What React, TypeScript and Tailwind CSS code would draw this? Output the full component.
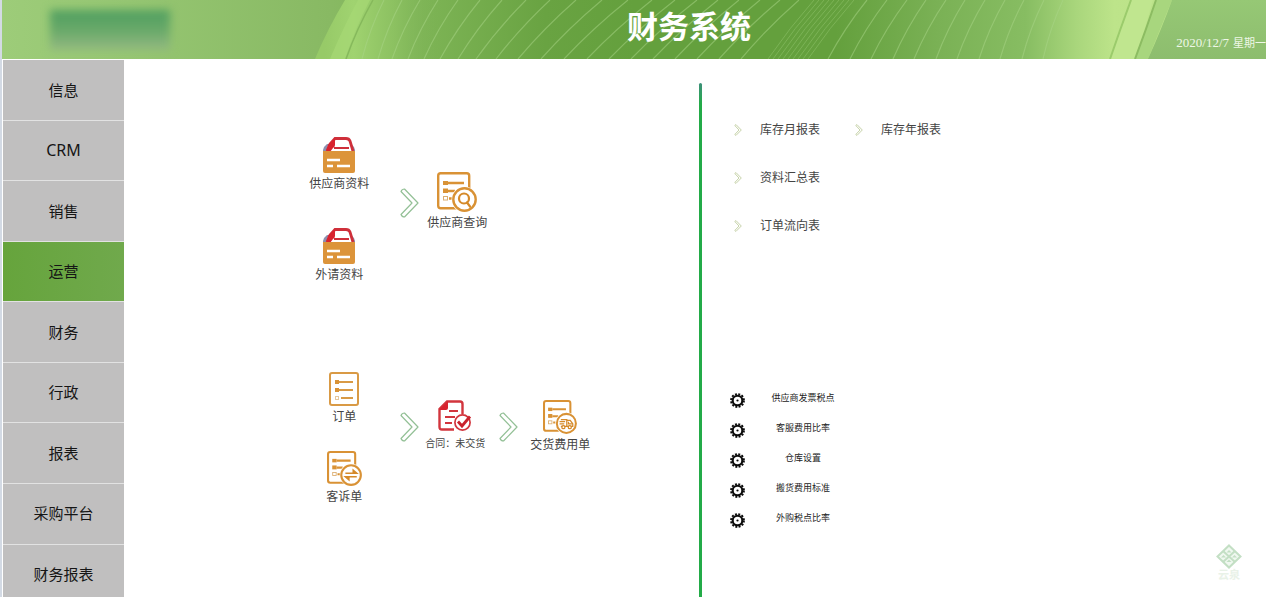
import { useState } from "react";
import type { ReactNode } from "react";

const menuItems = [
  "信息",
  "CRM",
  "销售",
  "运营",
  "财务",
  "行政",
  "报表",
  "采购平台",
  "财务报表",
];

const reportRows = [["库存月报表", "库存年报表"], ["资料汇总表"], ["订单流向表"]];

const settings = [
  "供应商发票税点",
  "客服费用比率",
  "仓库设置",
  "搬货费用标准",
  "外购税点比率",
];

// [bottom x, top x] of the thin lines across the banner
const bannerLines = [
  [362, 384], [378, 402], [392, 420], [408, 438], [424, 458], [440, 480],
  [458, 502], [476, 526], [496, 550], [518, 576], [541, 602], [564, 628],
  [587, 652], [609, 675], [631, 697], [653, 718], [675, 739], [697, 760],
  [719, 780], [741, 799], [828, 867], [850, 887], [871, 907], [893, 926],
  [914, 946], [936, 965], [957, 985], [979, 1005], [1000, 1024], [1022, 1044],
  [1043, 1063],
];

const denseLines = [768, 773, 778, 783, 788, 793, 798, 803, 808];

const Banner = () => (
  <svg
    className="absolute inset-0 h-full w-full"
    viewBox="2 0 1264 59"
    preserveAspectRatio="none"
    aria-hidden="true"
  >
    <defs>
      <linearGradient id="base" x1="2" x2="1266" gradientUnits="userSpaceOnUse">
        <stop offset="0" stopColor="#9dcc79" />
        <stop offset="0.1" stopColor="#96c672" />
        <stop offset="0.26" stopColor="#88b963" />
        <stop offset="0.34" stopColor="#7cb354" />
        <stop offset="0.43" stopColor="#69a342" />
        <stop offset="0.5" stopColor="#64a03d" />
        <stop offset="0.66" stopColor="#64a03d" />
        <stop offset="0.74" stopColor="#7ab155" />
        <stop offset="0.81" stopColor="#87bd62" />
        <stop offset="0.85" stopColor="#a9d67c" />
        <stop offset="0.88" stopColor="#bde48a" />
        <stop offset="0.91" stopColor="#bbe289" />
      </linearGradient>
      <linearGradient id="band" x1="325" x2="440" gradientUnits="userSpaceOnUse">
        <stop offset="0" stopColor="#97ca68" />
        <stop offset="0.25" stopColor="#a0d370" />
        <stop offset="0.6" stopColor="#8fc463" stopOpacity="0.8" />
        <stop offset="1" stopColor="#7ab155" stopOpacity="0" />
      </linearGradient>
      <linearGradient id="tail" x1="0" x2="0" y1="0" y2="1">
        <stop offset="0" stopColor="#96c875" />
        <stop offset="1" stopColor="#8dbd6e" />
      </linearGradient>
    </defs>
    <rect x="2" width="1264" height="59" fill="url(#base)" />
    <path d="M315 59Q328 28 345 0H450V59Z" fill="url(#band)" />
    <path d="M330 59Q343 28 358 0H370Q355 28 345 59Z" fill="#a6d975" opacity="0.7" />
    <path d="M346 59Q357 28 373 0" fill="none" stroke="#86b95c" strokeWidth="1.5" />
    {bannerLines.map(([bottom, top]) => (
      <path
        key={bottom}
        d={`M${bottom} 59Q${(bottom + top) / 2 - 3} 28 ${top} 0`}
        fill="none"
        stroke="#a9d588"
        strokeWidth="1.2"
        opacity="0.5"
      />
    ))}
    {denseLines.map((x) => (
      <path
        key={x}
        d={`M${x} 59Q${x + 22} 27 ${x + 46} 0`}
        fill="none"
        stroke="#8cbf68"
        strokeWidth="1"
        opacity="0.6"
      />
    ))}
    <path d="M1110 59Q1120 30 1131 0H1153Q1145 30 1135 59Z" fill="#c0e68f" />
    <path d="M1110 59Q1120 30 1131 0" fill="none" stroke="#9bcb6c" strokeWidth="2" />
    <path d="M1135 59Q1146 30 1156 0H1172L1148 59Z" fill="#a8d67e" />
    <path d="M1135 59Q1146 30 1156 0" fill="none" stroke="#8cbc62" strokeWidth="2" />
    <path d="M1148 59Q1162 28 1172 0H1266V59Z" fill="url(#tail)" />
  </svg>
);

const FolderIcon = () => (
  <svg width="34" height="36" viewBox="0 0 34 36" aria-hidden="true">
    <path d="M1 13Q2 9 5 7H29Q32 9 33 13V16H1Z" fill="#8d8fae" />
    <path d="M5 15V10L13 2H26Q28 2 28 4L30 15Z" fill="#fff" />
    <path d="M5 14L8 7L13 1.5H24Q27 1.5 28 4L31 14" fill="none" stroke="#cf2f3a" strokeWidth="2.8" />
    <path d="M4 15L6 8L13 1V8Q13 10 11 11L8 15Z" fill="#d8232f" />
    <path d="M12 11H27" stroke="#cf2f3a" strokeWidth="2" />
    <path d="M1 14H33V34Q33 36 31 36H3Q1 36 1 34Z" fill="#dc943a" />
    <path d="M5 23H18M5 29H11M15 29H28" stroke="#fff" strokeWidth="2.4" />
  </svg>
);

const OrderIcon = () => (
  <svg width="30" height="34" viewBox="0 0 30 34" aria-hidden="true">
    <rect x="1" y="1" width="28" height="32" rx="2" fill="#fff" stroke="#d99a45" strokeWidth="2" />
    <rect x="6" y="8" width="4" height="4" fill="#d99235" />
    <rect x="6" y="16" width="4" height="4" fill="#d99235" />
    <rect x="6.5" y="24.5" width="3" height="3" fill="none" stroke="#e6c79b" />
    <path d="M10 10H24M10 18H24M12 26H24" stroke="#d99a45" strokeWidth="2" />
  </svg>
);

// list sheet with a round badge over its lower right corner
const SheetIcon = ({ size, children }: { size: number; children: ReactNode }) => (
  <svg width={size} height={size} viewBox="0 0 40 40" aria-hidden="true">
    <rect x="1.2" y="1.2" width="31" height="35" rx="2.5" fill="#fff" stroke="#d99235" strokeWidth="2.4" />
    <rect x="6" y="9" width="5" height="4" fill="#d99235" />
    <rect x="6" y="16.5" width="5" height="4.5" fill="#d99235" />
    <rect x="6.5" y="24.5" width="4" height="3.5" fill="none" stroke="#dcae70" />
    <path d="M11 11H27M11 19H18M12 26.5H15" stroke="#d99235" strokeWidth="2.4" />
    <circle cx="27.5" cy="27.5" r="13" fill="#fff" />
    <circle cx="27.5" cy="27.5" r="11.2" fill="#fff" stroke="#d99235" strokeWidth="2.4" />
    {children}
  </svg>
);

const SearchBadge = () => (
  <g fill="none" stroke="#d58a2a" strokeWidth="2.2">
    <circle cx="27" cy="26.5" r="5" />
    <path d="M30 30.5L33 34.5" strokeLinecap="round" />
  </g>
);

const SwapBadge = () => (
  <g fill="#d58a2a" stroke="#d58a2a" strokeWidth="1.8">
    <path d="M21 25.5H34L30 22V25.5M34 29.5H21L25 33V29.5" />
  </g>
);

const TruckBadge = () => (
  <g fill="none" stroke="#d58a2a" strokeWidth="1.5">
    <path d="M21 23H28V31H21M19.5 25.5H26M19.5 28H25M28 24H32L35 28V31H28" />
    <path d="M30 25.5V28H34" />
    <circle cx="24" cy="32" r="1.8" fill="#fff" />
    <circle cx="31.5" cy="32" r="1.8" fill="#fff" />
  </g>
);

const ContractIcon = () => (
  <svg width="34" height="32" viewBox="0 0 34 32" aria-hidden="true">
    <path
      d="M16 29.5H4Q1.5 29.5 1.5 27V9L9 1.5H22Q24.5 1.5 24.5 4V14"
      fill="none"
      stroke="#d2353d"
      strokeWidth="2.4"
    />
    <path d="M1 10L10 1V8Q10 10 8 10Z" fill="#d8232f" />
    <path d="M11 11H20M7 17H17M7 23H14" stroke="#d2353d" strokeWidth="2" />
    <circle cx="24.5" cy="22.5" r="7.6" fill="#fff" stroke="#d2353d" strokeWidth="1.7" />
    <path d="M20 21.5L24 26L32 16.5" fill="none" stroke="#c9222c" strokeWidth="2.8" />
  </svg>
);

const FlowArrow = () => (
  <svg className="shrink-0" width="19" height="30" viewBox="0 0 19 30" aria-hidden="true">
    <path
      d="M1 3.5Q2 1 4.5 1L18 15L4.5 29Q2 29 1 26.5L12 15Z"
      fill="#fff"
      stroke="#93c096"
      strokeWidth="1.2"
      strokeLinejoin="round"
    />
  </svg>
);

const SmallArrow = () => (
  <svg className="shrink-0" width="8" height="12" viewBox="0 0 8 12" aria-hidden="true">
    <path d="M.8 1.5L2 .6L7.3 6L2 11.4L.8 10.5L5 6Z" fill="#fff" stroke="#b7c793" strokeWidth=".8" />
  </svg>
);

const GearIcon = () => (
  <svg className="shrink-0" width="15" height="15" viewBox="0 0 15 15" aria-hidden="true">
    <circle cx="7.5" cy="7.5" r="6.5" fill="none" stroke="#0b0b0b" strokeWidth="1.8" strokeDasharray="2 1.403" />
    <circle cx="7.5" cy="7.5" r="4.8" fill="none" stroke="#0b0b0b" strokeWidth="2.1" />
    <circle cx="7.5" cy="7.5" r="1.1" fill="#0b0b0b" />
  </svg>
);

type FlowItemProps = { label: string; small?: boolean; children: ReactNode };

const FlowItem = ({ label, small, children }: FlowItemProps) => (
  <button
    type="button"
    className={`flex flex-col items-center gap-[3px] whitespace-nowrap leading-4 text-[#444] ${
      small ? "text-[10px]" : "text-xs"
    }`}
  >
    {children}
    {label}
  </button>
);

const App = () => {
  const [active, setActive] = useState("运营");

  return (
    <div className="relative flex h-screen flex-col overflow-hidden border-l-2 border-[#d3dae4] bg-white font-['Noto_Sans','Noto_Sans_CJK_SC',sans-serif]">
      <header className="relative flex h-[59px] shrink-0 justify-center overflow-hidden">
        <Banner />
        <div className="absolute left-12 top-2.5 h-10 w-30 bg-linear-to-b from-[#4f9f60] via-[#68a969] to-[#94b982] blur-[4px]" />
        <h1 className="relative ml-[110px] mt-1 text-[31px] font-bold leading-11 text-white">
          财务系统
        </h1>
        <time className="absolute bottom-2 right-0 flex items-center gap-1 whitespace-nowrap font-['Liberation_Serif','Noto_Sans_CJK_SC',serif] leading-4 text-[#eef7e6]">
          <span className="text-[13px]">2020/12/7</span>
          <span className="text-[11px]">星期一</span>
        </time>
      </header>

      <div className="mt-px flex min-h-0 flex-1">
        <nav className="ml-px w-[121px] shrink-0">
          <ul className="flex h-[545px] flex-col">
            {menuItems.map((item) => (
              <li key={item} className="flex-1 border-b border-[#e2e2e2]">
                <button
                  type="button"
                  onClick={() => setActive(item)}
                  className={`h-full w-full text-[#151515] ${
                    item === "CRM" ? "text-base" : "text-[15px]"
                  } ${
                    item === active
                      ? "bg-linear-to-r from-[#66a43c] to-[#70a94c]"
                      : "bg-[#c0bfbf]"
                  }`}
                >
                  {item}
                </button>
              </li>
            ))}
          </ul>
        </nav>

        <main className="grid flex-1 grid-cols-[575fr_567fr]">
          <section className="pl-[31%] pt-[77px]">
            <div className="flex items-start">
              <div className="flex w-[74px] flex-col items-center gap-9">
                <FlowItem label="供应商资料">
                  <FolderIcon />
                </FlowItem>
                <FlowItem label="外请资料">
                  <FolderIcon />
                </FlowItem>
              </div>
              <div className="ml-6 mt-[51px]">
                <FlowArrow />
              </div>
              <div className="ml-2 mt-[35px] flex w-15 justify-center">
                <FlowItem label="供应商查询">
                  <SheetIcon size={40}>
                    <SearchBadge />
                  </SheetIcon>
                </FlowItem>
              </div>
            </div>

            <div className="mt-[89px] flex items-start">
              <div className="flex w-[84px] flex-col items-center gap-[26px]">
                <FlowItem label="订单">
                  <OrderIcon />
                </FlowItem>
                <FlowItem label="客诉单">
                  <SheetIcon size={35}>
                    <SwapBadge />
                  </SheetIcon>
                </FlowItem>
              </div>
              <div className="ml-3.5 mt-10">
                <FlowArrow />
              </div>
              <div className="ml-1.5 mt-7 flex w-15 justify-center">
                <FlowItem label="合同：未交货" small>
                  <ContractIcon />
                </FlowItem>
              </div>
              <div className="ml-3.5 mt-10">
                <FlowArrow />
              </div>
              <div className="ml-3 mt-7 flex w-15 justify-center">
                <FlowItem label="交货费用单">
                  <SheetIcon size={34}>
                    <TruckBadge />
                  </SheetIcon>
                </FlowItem>
              </div>
            </div>
          </section>

          <section className="mt-[23px] flex">
            <div className="w-[3px] rounded-t bg-linear-to-b from-[#3c8f78] to-[#23ab48] to-4%" />
            <div className="pl-8">
              <div className="flex flex-col gap-8 pt-[39px]">
                {reportRows.map((row) => (
                  <div key={row[0]} className="flex">
                    {row.map((name) => (
                      <a
                        key={name}
                        href="#"
                        className="flex w-[121px] items-center gap-[18px] whitespace-nowrap text-xs leading-4 text-[#444]"
                      >
                        <SmallArrow />
                        {name}
                      </a>
                    ))}
                  </div>
                ))}
              </div>

              <ul className="-ml-1 mt-[149px]">
                {settings.map((name) => (
                  <li key={name}>
                    <button type="button" className="flex h-[30px] items-center text-[9px] text-[#222]">
                      <span className="mt-1">
                        <GearIcon />
                      </span>
                      <span className="ml-4 w-[84px] text-center">{name}</span>
                    </button>
                  </li>
                ))}
              </ul>
            </div>
          </section>
        </main>
      </div>

      <div className="absolute bottom-4 right-6 flex flex-col items-center text-[11px] font-bold leading-3 text-[#e9f2e8]">
        <svg width="26" height="25" viewBox="0 0 26 25" aria-hidden="true">
          <path d="M13 1.5L24.5 12.5L13 23.5L1.5 12.5Z" fill="#f0f8f0" stroke="#c3dfc4" strokeWidth="2" />
          <path d="M7 7L19 18M19 7L7 18" stroke="#c3dfc4" strokeWidth="2" />
          <g fill="#c3dfc4">
            <path d="M10.5 8.5L13 6L15.5 8.5Z" />
            <path d="M10.5 18L13 15.5L15.5 18Z" />
            <path d="M5 13.5L7.5 11L10 13.5Z" />
            <path d="M16 13.5L18.5 11L21 13.5Z" />
          </g>
        </svg>
        云泉
      </div>
    </div>
  );
};

export default App;
